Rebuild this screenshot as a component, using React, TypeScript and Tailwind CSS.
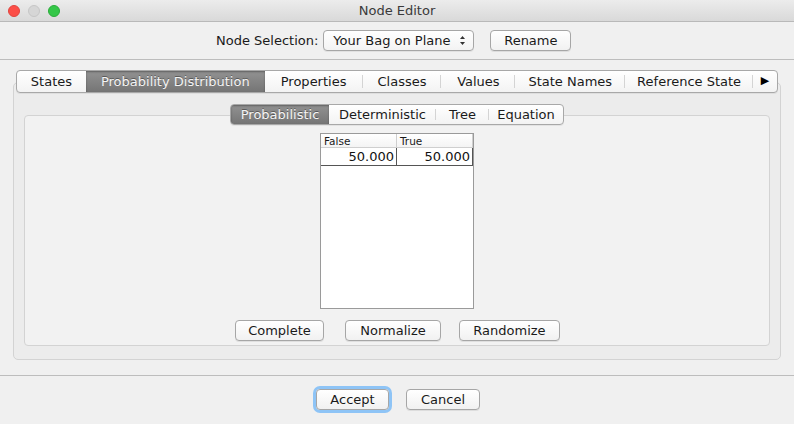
import React from "react";

const font = { fontFamily: '"DejaVu Sans", "Liberation Sans", sans-serif' };

function MacButton({ label, w, focus }: { label: string; w: string; focus?: boolean }) {
  return (
    <div
      className={`${w} h-[21px] flex items-center justify-center rounded-[4px] border border-[#a6a6a6] bg-gradient-to-b from-[#ffffff] to-[#f1f1f1] text-[13px] text-[#1a1a1a] shadow-[0_1px_0_rgba(0,0,0,0.08)] ${focus ? "ring-[3px] ring-[#8ec4f6] border-[#6fa8e0]" : ""}`}
    >
      {label}
    </div>
  );
}

const mainTabs: { label: string; w: string }[] = [
  { label: "States", w: "w-[69px]" },
  { label: "Probability Distribution", w: "w-[179px]" },
  { label: "Properties", w: "w-[98px]" },
  { label: "Classes", w: "w-[79px]" },
  { label: "Values", w: "w-[74px]" },
  { label: "State Names", w: "w-[110px]" },
  { label: "Reference State", w: "w-[128px]" },
];

const subTabs: { label: string; w: string }[] = [
  { label: "Probabilistic", w: "w-[98px]" },
  { label: "Deterministic", w: "w-[107px]" },
  { label: "Tree", w: "w-[53px]" },
  { label: "Equation", w: "w-[74px]" },
];

function TabStrip({ tabs, selected, arrow, h }: { tabs: { label: string; w: string }[]; selected: number; arrow?: boolean; h: string }) {
  return (
    <div className={`flex ${h} rounded-[4px] border border-[#a8a8a8] bg-gradient-to-b from-[#ffffff] to-[#f3f3f3] overflow-hidden shadow-[0_1px_0_rgba(0,0,0,0.06)]`}>
      {tabs.map((t, i) => {
        const sel = i === selected;
        const nextSel = i + 1 === selected;
        return (
          <div
            key={t.label}
            className={`${t.w} relative flex items-center justify-center text-[13px] ${
              sel
                ? "bg-gradient-to-b from-[#929292] to-[#757575] text-[#f4f4f4] [text-shadow:0_-1px_0_rgba(0,0,0,0.35)] shadow-[inset_0_1px_2px_rgba(0,0,0,0.35)]"
                : "text-[#1a1a1a]"
            }`}
          >
            {t.label}
            {!sel && !nextSel && (i < tabs.length - 1 || arrow) && (
              <span className="absolute right-0 top-[4px] bottom-[4px] w-px bg-[#d4d4d4]" />
            )}
          </div>
        );
      })}
      {arrow && (
        <div className="w-[24px] flex items-center justify-center text-[11px] text-black">▶</div>
      )}
    </div>
  );
}

export default function App() {
  return (
    <div style={font} className="w-[794px] h-[424px] bg-[#f0f0f0] flex flex-col overflow-hidden">
      {/* Title bar */}
      <div className="relative h-[22px] flex items-center justify-center bg-gradient-to-b from-[#ececec] to-[#d9d9d9] border-b border-[#b9b9b9]">
        <div className="absolute left-[8px] top-[5px] flex gap-[8px]">
          <span className="w-[12px] h-[12px] rounded-full bg-[#fc4e47] border border-[#e0443e]" />
          <span className="w-[12px] h-[12px] rounded-full bg-[#d6d6d6] border border-[#c6c6c6]" />
          <span className="w-[12px] h-[12px] rounded-full bg-[#34c748] border border-[#2aac3a]" />
        </div>
        <span className="text-[13px] text-[#3a3a3a]">Node Editor</span>
      </div>

      {/* Node selection row */}
      <div className="h-[38px] flex items-center pl-[216px] border-b border-[#bdbdbd]">
        <span className="text-[13px] text-[#1a1a1a] mr-[5px]">Node Selection:</span>
        <div className="w-[151px] h-[21px] flex items-center justify-between pl-[9px] pr-[7px] rounded-[4px] border border-[#a6a6a6] bg-gradient-to-b from-[#ffffff] to-[#f3f3f3] text-[13px] text-[#1a1a1a] shadow-[0_1px_0_rgba(0,0,0,0.06)]">
          <span>Your Bag on Plane</span>
          <svg width="7" height="11" viewBox="0 0 7 11">
            <path d="M3.5 1 L6 4 L1 4 Z" fill="#333" />
            <path d="M3.5 10 L6 7 L1 7 Z" fill="#333" />
          </svg>
        </div>
        <div className="ml-[16px]">
          <MacButton label="Rename" w="w-[81px]" />
        </div>
      </div>

      {/* Main tab area */}
      <div className="flex flex-col px-[13px] pt-[10px]">
        <div className="relative z-10 px-[3px]">
          <TabStrip tabs={mainTabs} selected={1} arrow h="h-[23px]" />
        </div>
        <div className="-mt-[11px] h-[278px] rounded-[5px] border border-[#d3d3d3] bg-[#ececec] flex flex-col px-[10px] pt-[21px]">
          <div className="relative z-10 flex justify-center">
            <TabStrip tabs={subTabs} selected={0} h="h-[21px]" />
          </div>
          <div className="-mt-[10px] h-[231px] rounded-[4px] border border-[#d3d3d3] bg-[#f2f2f2] flex flex-col items-center pt-[17px]">
            {/* Table */}
            <div className="w-[154px] h-[176px] bg-white border border-[#9a9a9a] flex flex-col">
              <div className="h-[14px] flex text-[10.5px] text-[#1a1a1a] bg-gradient-to-b from-[#ffffff] to-[#f4f4f4] border-b border-[#cfcfcf]">
                <div className="w-[76px] pl-[3px] leading-[14px] border-r border-[#cfcfcf]">False</div>
                <div className="flex-1 pl-[3px] leading-[14px] border-r border-[#cfcfcf]">True</div>
              </div>
              <div className="h-[18px] flex text-[13px] text-[#111] border-b border-[#555]">
                <div className="w-[76px] pr-[2px] text-right leading-[18px] border-r border-[#555]">50.000</div>
                <div className="flex-1 pr-[2px] text-right leading-[18px] border-r border-[#555]">50.000</div>
              </div>
            </div>
            <div className="flex gap-[21px] mt-[11px] pr-[2px] pl-[3px]">
              <MacButton label="Complete" w="w-[89px]" />
              <div className="flex gap-[18px]">
                <MacButton label="Normalize" w="w-[96px]" />
                <MacButton label="Randomize" w="w-[101px]" />
              </div>
            </div>
          </div>
        </div>
      </div>

      {/* Bottom */}
      <div className="mt-[15px] border-t border-[#bdbdbd] flex justify-center gap-[17px] pt-[13px] pl-[2px]">
        <MacButton label="Accept" w="w-[73px]" focus />
        <MacButton label="Cancel" w="w-[74px]" />
      </div>
    </div>
  );
}
